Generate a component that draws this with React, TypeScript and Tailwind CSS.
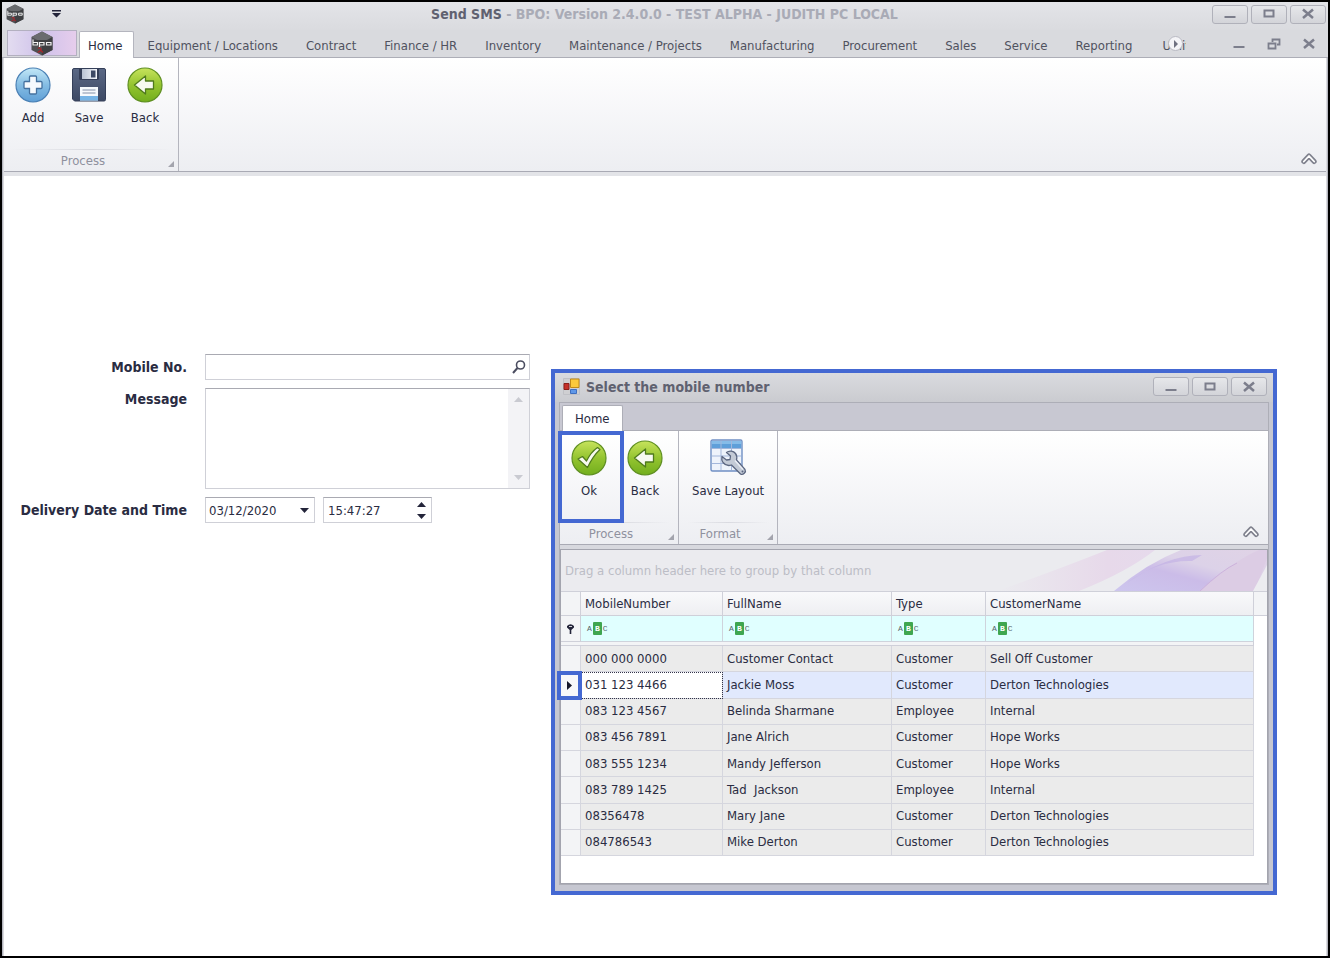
import { useState } from 'react'
import type { ReactNode } from 'react'

const TABS = [
  'Equipment / Locations',
  'Contract',
  'Finance / HR',
  'Inventory',
  'Maintenance / Projects',
  'Manufacturing',
  'Procurement',
  'Sales',
  'Service',
  'Reporting',
]

const COLUMNS = ['MobileNumber', 'FullName', 'Type', 'CustomerName']

const CONTACTS = [
  ['000 000 0000', 'Customer Contact', 'Customer', 'Sell Off Customer'],
  ['031 123 4466', 'Jackie Moss', 'Customer', 'Derton Technologies'],
  ['083 123 4567', 'Belinda Sharmane', 'Employee', 'Internal'],
  ['083 456 7891', 'Jane Alrich', 'Customer', 'Hope Works'],
  ['083 555 1234', 'Mandy Jefferson', 'Customer', 'Hope Works'],
  ['083 789 1425', 'Tad  Jackson', 'Employee', 'Internal'],
  ['08356478', 'Mary Jane', 'Customer', 'Derton Technologies'],
  ['084786543', 'Mike Derton', 'Customer', 'Derton Technologies'],
]

const LogoIcon = ({ className }: { className: string }) => (
  <svg className={className} viewBox="0 0 22 25">
    <path d="M11 0.5L21.5 6v13L11 24.5 0.5 19V6z" fill="#4f5053" />
    <path d="M11 0.5L21.5 6 11 11.5 0.5 6z" fill="#6a6b6e" />
    <path d="M11 12.5V24.500L21.500 19V6z" fill="#3e3f42" />
    <path d="M1 9h20v6H1z" fill="#3f4043" />
    <path d="M2 8.500v6M2 11.500h4.500v2.500H2M8.500 11.500h4.500v2.500H8.500M8.500 11v5M15.500 11.500H20v2.500h-4.500z" fill="none" stroke="#f3f3f3" strokeWidth="1.200" />
    <path d="M7 17.500c2-1.500 4 0 2.500 2s-3 1-2 2M10 19.500l2 2" fill="none" stroke="#a3262b" strokeWidth="1.300" />
  </svg>
)

const AddIcon = () => (
  <svg width="36" height="36" viewBox="0 0 36 36">
    <defs>
      <linearGradient id="blue" x1="0" y1="0" x2="0" y2="1">
        <stop offset="0" stopColor="#c3e8f7" />
        <stop offset="0.5" stopColor="#84bce3" />
        <stop offset="1" stopColor="#5f9fd6" />
      </linearGradient>
    </defs>
    <circle cx="18" cy="18" r="17" fill="url(#blue)" stroke="#4a80b5" strokeWidth="1.200" />
    <path d="M15.500 9h5q1 0 1 1v4.500H26q1 0 1 1v5q0 1-1 1h-4.500V26q0 1-1 1h-5q-1 0-1-1v-4.500H10q-1 0-1-1v-5q0-1 1-1h4.500V10q0-1 1-1z" fill="#f5f9fd" stroke="#44719f" strokeWidth="1.300" />
  </svg>
)

const SaveIcon = () => (
  <svg width="36" height="36" viewBox="0 0 36 36">
    <defs>
      <linearGradient id="disk" x1="0" y1="0" x2="0" y2="1">
        <stop offset="0" stopColor="#5a6885" />
        <stop offset="1" stopColor="#3d4964" />
      </linearGradient>
      <linearGradient id="shutter" x1="0" y1="0" x2="1" y2="0">
        <stop offset="0" stopColor="#b9c2d2" />
        <stop offset="1" stopColor="#f4f6fa" />
      </linearGradient>
    </defs>
    <path d="M3 1.500h30q1.500 0 1.500 1.500v29.500q0 1.500-1.500 1.500H3.500L1.500 32V3q0-1.500 1.500-1.500z" fill="url(#disk)" stroke="#343f59" />
    <path d="M8 2h20v9.500q0 1.500-1.500 1.500h-17Q8 13 8 11.500z" fill="#343e57" />
    <path d="M11 2h15v10H11z" fill="url(#shutter)" />
    <path d="M20 3.500h4.500v7H20z" fill="#3d4964" />
    <path d="M9 20h18v13.500H9z" fill="#f5f9fd" />
    <path d="M9 29h18v4.500H9z" fill="#76b4e6" />
    <path d="M11.500 23h13M11.500 26h13" stroke="#8390a8" />
  </svg>
)

const GreenDisc = ({ children }: { children: ReactNode }) => (
  <svg width="36" height="36" viewBox="0 0 36 36">
    <defs>
      <linearGradient id="green" x1="0" y1="0" x2="0" y2="1">
        <stop offset="0" stopColor="#c7e35c" />
        <stop offset="0.5" stopColor="#94c430" />
        <stop offset="1" stopColor="#72ae1d" />
      </linearGradient>
    </defs>
    <circle cx="18" cy="18" r="17" fill="url(#green)" stroke="#5f8f22" strokeWidth="1.200" />
    {children}
  </svg>
)

const BackIcon = () => (
  <GreenDisc>
    <path d="M7.500 18L18.500 9v5H26.500v8H18.500v5z" fill="#f7faf0" stroke="#4f7a1c" strokeWidth="1.300" strokeLinejoin="round" />
  </GreenDisc>
)

const OkIcon = () => (
  <GreenDisc>
    <path d="M7 19l4.500-2.500 4 4.500Q20 12 26.500 7.500L29 9.500Q22 16 16.500 27.500z" fill="#f7faf0" stroke="#4f7a1c" strokeWidth="1.200" strokeLinejoin="round" />
  </GreenDisc>
)

const LayoutIcon = () => (
  <svg width="38" height="38" viewBox="0 0 38 38">
    <rect x="2" y="1" width="31" height="31" rx="1.500" fill="#eef3fb" stroke="#6f8fc4" strokeWidth="1.400" />
    <path d="M2.700 2h29.600v7.500H2.700z" fill="#5f9fd9" />
    <path d="M2.700 2h29.600v3H2.700z" fill="#86bce8" />
    <path d="M12 2v29M22.500 2v29M3 9.500h29M3 17h29M3 24.500h29" stroke="#a3b7db" />
    <path d="M17.500 13.500c3-2.500 7-1.500 9 1 1.500 2 1.500 4.500 1 6.500l8.500 9.500c1.500 2.500-2 6-4.500 4.500l-9-9c-3 1-6.500 0-8.500-2.500-1-1.500-1.500-4-1-6l4.500 3.500 3.500-.5 .5-3.500z" fill="#c3cad6" stroke="#5b6680" strokeWidth="1.300" strokeLinejoin="round" />
    <path d="M26 21.500l8 9" stroke="#e9edf4" strokeWidth="1.500" />
    <circle cx="33.500" cy="32.500" r="1" fill="#5b6680" />
  </svg>
)

const FormIcon = () => (
  <svg width="17" height="17" viewBox="0 0 17 17" className="shrink-0">
    <path d="M.5.5h16v16H.5z" fill="#cfcfd2" stroke="#c0c1c6" />
    <path d="M1 5.500h5v6H1z" fill="#c5302a" stroke="#8c1f1b" />
    <path d="M7.500 1h8.500v8.500H7.500z" fill="#fbc93c" stroke="#c08a1a" />
    <path d="M7.500 11.500h6v4h-6z" fill="#5f97e8" stroke="#3f6fc0" />
  </svg>
)

const MinimizeIcon = () => (
  <svg width="14" height="12" viewBox="0 0 14 12">
    <path d="M1.500 8h11v2h-11z" fill="#7c7e8c" />
  </svg>
)

const MaximizeIcon = () => (
  <svg width="14" height="12" viewBox="0 0 14 12">
    <path d="M2.500 2.500h9v6h-9z" fill="none" stroke="#7c7e8c" strokeWidth="2" />
  </svg>
)

const RestoreIcon = () => (
  <svg width="14" height="12" viewBox="0 0 14 12">
    <path d="M5.500 4V1.500h7v5H10" fill="none" stroke="#7c7e8c" strokeWidth="1.800" />
    <path d="M1.500 5.500h7v5h-7z" fill="none" stroke="#7c7e8c" strokeWidth="1.800" />
  </svg>
)

const CloseIcon = () => (
  <svg width="14" height="12" viewBox="0 0 14 12">
    <path d="M2 1.500l10 8.500M12 1.500L2 10" stroke="#7c7e8c" strokeWidth="2.500" />
  </svg>
)

const CollapseIcon = () => (
  <svg width="16" height="13" viewBox="0 0 16 13">
    <path d="M2.800 9.500L8 4l5.200 5.500" fill="none" stroke="#7f818d" strokeWidth="5" strokeLinejoin="round" strokeLinecap="round" />
    <path d="M2.800 9.500L8 4l5.200 5.500" fill="none" stroke="#fff" strokeWidth="1.800" strokeLinejoin="round" strokeLinecap="round" />
  </svg>
)

const Triangle = ({ up, className }: { up?: boolean; className?: string }) => (
  <svg width="9" height="5" viewBox="0 0 9 5" className={className}>
    <path d={up ? 'M0 5h9L4.500 0z' : 'M0 0h9L4.500 5z'} fill="currentColor" />
  </svg>
)

function WindowButtons() {
  const cls =
    'flex h-[19px] w-9 items-center justify-center rounded-[3px] border border-[#b0b1ba] bg-linear-to-b from-[#e6e7ea] to-[#d3d4d9]'
  return (
    <div className="flex shrink-0 gap-[3px]">
      <button type="button" aria-label="Minimize" className={cls}><MinimizeIcon /></button>
      <button type="button" aria-label="Maximize" className={cls}><MaximizeIcon /></button>
      <button type="button" aria-label="Close" className={cls}><CloseIcon /></button>
    </div>
  )
}

function RibbonButton({ icon, label }: { icon: ReactNode; label: string }) {
  return (
    <button type="button" className="flex min-w-14 flex-col items-center gap-1.5 px-2.5 leading-[18px] whitespace-nowrap">
      <span className="flex h-9 items-center">{icon}</span>
      <span className="px-0.5">{label}</span>
    </button>
  )
}

function RibbonGroup({ caption, children }: { caption: string; children: ReactNode }) {
  return (
    <div className="flex flex-col border-r border-[#b4b5be]">
      <div className="flex flex-1 items-start px-px pt-[9px]">{children}</div>
      <div className="mx-2 h-px bg-linear-to-r from-transparent via-[#d9dae0] to-transparent" />
      <div className="relative h-[21px] pr-4 text-center leading-[22px] text-[#8f919e]">
        {caption}
        <svg width="6" height="6" viewBox="0 0 6 6" className="absolute right-1 bottom-1">
          <path d="M6 0v6H0z" fill="#a3a4ad" />
        </svg>
      </div>
    </div>
  )
}

function Ribbon({ children }: { children: ReactNode }) {
  return (
    <div className="flex h-[114px] border-b border-[#a9aab4] bg-linear-to-b from-white to-[#edeef2]">
      {children}
      <button type="button" aria-label="Collapse the ribbon" className="mr-[9px] mb-1.5 ml-auto self-end">
        <CollapseIcon />
      </button>
    </div>
  )
}

function FilterCell({ column }: { column: string }) {
  return (
    <td className="border-r border-b border-[#cfd3dc] bg-[#e0ffff] p-0">
      <div className="flex items-center pl-1.5">
        <button
          type="button"
          aria-label={`${column} filter condition`}
          className="flex items-center gap-px font-['Liberation_Mono',monospace] text-[8px] leading-[13px] text-[#566568]"
        >
          A
          <span className="w-[9px] rounded-[1px] bg-[#3fa650] text-center font-bold text-white">B</span>
          C
        </button>
        <input aria-label={`Filter ${column}`} className="ml-1 w-0 flex-1 bg-transparent outline-none" />
      </div>
    </td>
  )
}

function ContactGrid() {
  const [selected, setSelected] = useState(1)

  return (
    <div className="border border-[#a3a4ae] bg-white pb-[27px]">
      {/* Group panel */}
      <div className="relative flex h-[41px] items-center overflow-hidden bg-[#ebebef] pl-1 text-[#bcbdc6]">
        <svg viewBox="0 0 270 41" preserveAspectRatio="none" className="absolute right-0 h-full w-[270px]">
          <defs>
            <linearGradient id="pink" x1="0" y1="0" x2="1" y2="0">
              <stop offset="0" stopColor="#ebebef" />
              <stop offset="0.7" stopColor="#e7d9ea" />
              <stop offset="1" stopColor="#e6daec" />
            </linearGradient>
            <linearGradient id="violet" x1="0" y1="1" x2="1" y2="0">
              <stop offset="0" stopColor="#cdc6ee" />
              <stop offset="0.4" stopColor="#cbbce8" />
              <stop offset="0.6" stopColor="#dcd2e8" />
              <stop offset="1" stopColor="#e0d3e6" />
            </linearGradient>
          </defs>
          <path d="M0 41Q60 20 110 0h48Q130 22 82 41z" fill="url(#pink)" />
          <path d="M117 41Q150 13 184 0h86v41z" fill="url(#violet)" />
          <path d="M130 33Q160 10 195 11L205 5Q170 5 130 33z" fill="#bfaee4" opacity="0.6" />
          <path d="M203 41Q238 10 262 0h8v8l-12 33z" fill="#dccce4" />
          <path d="M203 41Q225 20 240 13" fill="none" stroke="#cdb2dc" />
          <path d="M256 41l14-26v26z" fill="#ececf0" />
        </svg>
        <span className="relative">Drag a column header here to group by that column</span>
      </div>

      <table className="h-[265px] w-full table-fixed border-separate border-spacing-0 text-left text-[#2a2c42]">
        <colgroup>
          <col className="w-5" />
          <col className="w-[142px]" />
          <col className="w-[169px]" />
          <col className="w-[94px]" />
          <col />
          <col className="w-[13px]" />
        </colgroup>
        <thead>
          <tr className="h-[25px]">
            <th className="border-y border-r border-[#cfd0d9] bg-[#f3f4f6] p-0" />
            {COLUMNS.map(c => (
              <th key={c} className="border-y border-r border-[#cfd0d9] bg-linear-to-b from-[#f9f9fb] to-[#eeeff2] p-0 pl-1 font-normal">
                {c}
              </th>
            ))}
            <th className="border-y border-[#cfd0d9] bg-[#f3f4f6] p-0" />
          </tr>
          <tr className="h-[26px]">
            <td className="border-r border-b border-[#cfd0d9] bg-[#f3f4f6] p-0">
              <svg width="7" height="10" viewBox="0 0 7 10" className="mx-auto">
                <path d="M0 2q3.500-3.500 7 0v1.500L4.300 6v4H2.700V6L0 3.500z" fill="#23243a" />
                <path d="M2 2.500h3" stroke="#fff" strokeWidth="0.800" />
              </svg>
            </td>
            {COLUMNS.map(c => <FilterCell key={c} column={c} />)}
            <td />
          </tr>
          <tr className="h-1">
            <td colSpan={5} className="border-r border-b border-[#cfd0d9] bg-[#f3f4f6] p-0" />
            <td className="p-0" />
          </tr>
        </thead>
        <tbody>
          {CONTACTS.map((row, i) => (
            <tr key={row[0]} onClick={() => setSelected(i)} className={i === selected ? 'bg-[#e1e9fd]' : 'bg-[#ebebeb]'}>
              <td className="relative border-r border-b border-[#d5d6de] bg-[#f3f4f6] p-0">
                {i === selected && (
                  <span className="absolute -top-px -bottom-0.5 -left-1 z-10 flex w-[25px] items-center justify-center border-4 border-[#4468d2] bg-[#f7f7fa]">
                    <svg width="5" height="9" viewBox="0 0 5 9">
                      <path d="M0 0l5 4.500L0 9z" fill="#16172b" />
                    </svg>
                  </span>
                )}
              </td>
              {row.map((cell, j) => (
                <td
                  key={j}
                  className={
                    i === selected && j === 0
                      ? 'border-r border-b border-[#d5d6de] bg-white p-0 pl-1 whitespace-pre outline-1 -outline-offset-1 outline-[#33344a] outline-dotted'
                      : 'border-r border-b border-[#d5d6de] p-0 pl-1 whitespace-pre'
                  }
                >
                  {cell}
                </td>
              ))}
              <td className="bg-white p-0" />
            </tr>
          ))}
        </tbody>
      </table>
    </div>
  )
}

function SelectNumberDialog() {
  return (
    <div
      role="dialog"
      aria-labelledby="dialog-title"
      className="absolute top-[367px] left-[549px] w-[726px] border-4 border-[#4468d2] bg-[#c6c7d1] pb-1.5"
    >
      <div className="flex h-[29px] items-center gap-1.5 bg-linear-to-b from-[#dadbdf] to-[#cacbd0] pr-1.5 pb-0.5 pl-2">
        <FormIcon />
        <h2 id="dialog-title" className="flex-1 text-[14px] font-bold text-[#5f6170]">Select the mobile number</h2>
        <WindowButtons />
      </div>
      <div className="mx-1 border border-[#adaeb7] bg-[#d7d8de]">
        <div className="flex h-7 items-end border-b border-[#adaeb7] bg-[#c8c8d2] pl-0.5">
          <button type="button" className="-mb-px h-[26px] rounded-t-[2px] border-x border-t border-[#adaeb7] bg-white px-3">
            Home
          </button>
        </div>
        <div className="relative">
          <Ribbon>
            <RibbonGroup caption="Process">
              <RibbonButton icon={<OkIcon />} label="Ok" />
              <RibbonButton icon={<BackIcon />} label="Back" />
              <span className="w-1" />
            </RibbonGroup>
            <RibbonGroup caption="Format">
              <RibbonButton icon={<LayoutIcon />} label="Save Layout" />
            </RibbonGroup>
          </Ribbon>
          {/* Callout frame around the Ok command */}
          <div className="pointer-events-none absolute top-0 -left-0.5 h-[92px] w-[66px] border-4 border-[#4468d2]" />
        </div>
        <div className="pt-1">
          <ContactGrid />
        </div>
      </div>
    </div>
  )
}

export default function App() {
  const [mobile, setMobile] = useState('')
  const [message, setMessage] = useState('')
  const [date, setDate] = useState('03/12/2020')
  const [time, setTime] = useState('15:47:27')

  const field = 'flex border border-[#cfd0d7] border-t-[#a9aab2] bg-white'
  const label = 'text-right text-[14px] leading-[18px] font-bold whitespace-nowrap'

  return (
    <div className="relative flex min-h-screen flex-col border-2 border-black bg-[#d9dade] font-['DejaVu_Sans_Condensed','DejaVu_Sans',sans-serif] text-[13px] leading-[18px] text-[#2a2c42]">
      {/* Title bar */}
      <header className="flex h-7 items-center bg-linear-to-b from-[#e3e4e8] to-[#dadbdf] pr-0.5 pb-1 pl-1">
        <LogoIcon className="h-5 w-[18px]" />
        <button type="button" aria-label="Customize quick access toolbar" className="ml-6 px-1 text-[#23243a]">
          <svg width="9" height="8" viewBox="0 0 9 8">
            <path d="M0 0h9v1.500H0zM0 3h9L4.500 7.500z" fill="currentColor" />
          </svg>
        </button>
        <h1 className="flex-1 pl-[52px] text-center text-[14px] font-bold text-[#a9abb6]">
          <span className="text-[#5f6170]">Send SMS</span> - BPO: Version 2.4.0.0 - TEST ALPHA - JUDITH PC LOCAL
        </h1>
        <WindowButtons />
      </header>

      {/* Ribbon tabs */}
      <nav className="flex h-7 items-end border-b border-[#adaeb7] pl-[5px] text-[#50525f]">
        <button
          type="button"
          aria-label="Application menu"
          className="mr-0.5 mb-px flex h-[26px] w-[70px] shrink-0 items-center justify-center border border-[#b3b0c0] bg-linear-to-r from-[#e3dcf0] via-[#cfc2ea] to-[#e6cdec]"
        >
          <LogoIcon className="h-[25px] w-[22px]" />
        </button>
        <button
          type="button"
          className="-mb-px h-[27px] rounded-t-[2px] border-x border-t border-[#b4b5be] bg-white pt-0.5 pr-2.5 pl-2 text-[#2a2c42]"
        >
          Home
        </button>
        {TABS.map(t => (
          <button key={t} type="button" className="h-[23px] px-3.5 whitespace-nowrap">{t}</button>
        ))}
        <div className="relative ml-4 h-[23px] w-6 overflow-hidden">
          <button type="button" className="h-full whitespace-nowrap">Utilities</button>
          <button
            type="button"
            aria-label="Scroll tabs right"
            className="absolute top-0.5 left-1.5 flex size-[15px] items-center justify-center rounded-full border border-[#b9bac3] bg-[#f4f4f7]"
          >
            <svg width="4" height="8" viewBox="0 0 4 8">
              <path d="M0 0l4 4-4 4z" fill="#6f7180" />
            </svg>
          </button>
        </div>
        <div className="mr-3 mb-[7px] ml-auto flex gap-[21px]">
          <button type="button" aria-label="Minimize child window"><MinimizeIcon /></button>
          <button type="button" aria-label="Restore child window"><RestoreIcon /></button>
          <button type="button" aria-label="Close child window"><CloseIcon /></button>
        </div>
      </nav>

      <div className="flex flex-1 flex-col border-x border-[#b4b5be] px-px">
        <Ribbon>
          <RibbonGroup caption="Process">
            <RibbonButton icon={<AddIcon />} label="Add" />
            <RibbonButton icon={<SaveIcon />} label="Save" />
            <RibbonButton icon={<BackIcon />} label="Back" />
            <span className="w-1" />
          </RibbonGroup>
        </Ribbon>

        <main className="flex-1 border-t-4 border-[#e3e4e8] bg-white pt-[178px]">
          <form className="grid grid-cols-[183px_325px] gap-x-[18px] gap-y-2" onSubmit={e => e.preventDefault()}>
            <label htmlFor="mobile" className={`${label} self-center`}>Mobile No.</label>
            <div className={field}>
              <input id="mobile" value={mobile} onChange={e => setMobile(e.target.value)} className="h-6 w-0 flex-1 px-1 outline-none" />
              <button type="button" aria-label="Find a number" className="px-[3px]">
                <svg width="14" height="14" viewBox="0 0 14 14" fill="none" stroke="#4b4d60">
                  <circle cx="8.500" cy="5" r="4" strokeWidth="1.600" />
                  <path d="M5.500 8L1 13" strokeWidth="2" />
                </svg>
              </button>
            </div>

            <label htmlFor="message" className={`${label} pt-0.5`}>Message</label>
            <div className={field}>
              <textarea
                id="message"
                value={message}
                onChange={e => setMessage(e.target.value)}
                className="h-[99px] w-0 flex-1 resize-none px-1 outline-none"
              />
              <div className="flex w-[21px] flex-col items-center justify-between bg-[#f3f3f6] py-2 text-[#c9cad1]">
                <Triangle up />
                <Triangle />
              </div>
            </div>

            <label htmlFor="date" className={`${label} self-center`}>Delivery Date and Time</label>
            <div className="flex gap-2">
              <div className={`${field} w-[110px]`}>
                <input id="date" value={date} onChange={e => setDate(e.target.value)} className="h-6 w-0 flex-1 pl-[3px] outline-none" />
                <button type="button" aria-label="Open calendar" className="px-[5px]">
                  <Triangle className="text-[#23243a]" />
                </button>
              </div>
              <div className={`${field} w-[109px]`}>
                <input aria-label="Delivery time" value={time} onChange={e => setTime(e.target.value)} className="h-6 w-0 flex-1 pl-1 outline-none" />
                <div className="flex flex-col justify-center gap-[7px] px-[5px] text-[#23243a]">
                  <button type="button" aria-label="Later"><Triangle up /></button>
                  <button type="button" aria-label="Earlier"><Triangle /></button>
                </div>
              </div>
            </div>
          </form>
        </main>
      </div>

      <SelectNumberDialog />
    </div>
  )
}
